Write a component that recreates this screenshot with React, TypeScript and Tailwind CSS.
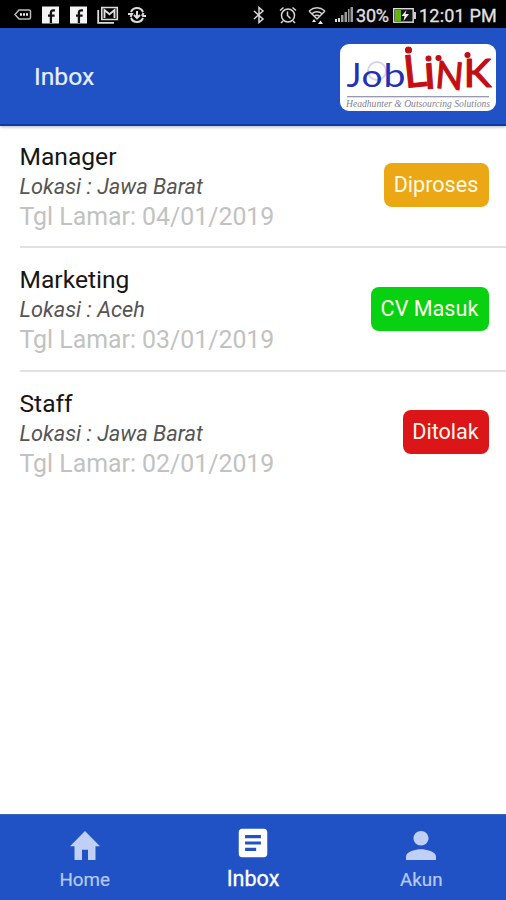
import React from 'react';

type Application = {
  title: string;
  location: string;
  date: string;
  status: string;
  badge: string;
};

const applications: Application[] = [
  { title: 'Manager', location: 'Jawa Barat', date: '04/01/2019', status: 'Diproses', badge: 'w-[105px] bg-[#eba814]' },
  { title: 'Marketing', location: 'Aceh', date: '03/01/2019', status: 'CV Masuk', badge: 'w-[118px] bg-[#08d111]' },
  { title: 'Staff', location: 'Jawa Barat', date: '02/01/2019', status: 'Ditolak', badge: 'w-[86px] bg-[#dc1518]' },
];

function FacebookIcon() {
  return (
    <svg width="17" height="18" viewBox="0 0 17 18">
      <rect width="17" height="17" y=".5" fill="#f4f4f4" />
      <path d="M13 4.3h-1.8q-2.3 0-2.3 2.4V17M6 9.6h6.6" fill="none" stroke="#111" strokeWidth="2.3" />
    </svg>
  );
}

function StatusBar() {
  return (
    <div className="flex h-7 shrink-0 items-center bg-black text-[#e2e2e2]">
      <svg className="ml-[14px]" width="18" height="13" viewBox="0 0 18 13" fill="none" stroke="#bcbcbc" strokeWidth="1.5">
        <path d="M1 6.5 5 2h10q1.5 0 1.5 1.5v6Q16.500 11 15 11H5Z" />
        <path d="M6 6.500h9" stroke="#eee" strokeWidth="2.500" strokeDasharray="2 1" />
      </svg>
      <div className="ml-[10px] mt-0.5"><FacebookIcon /></div>
      <div className="ml-[11px] mt-0.5"><FacebookIcon /></div>
      <svg className="ml-[10px] mt-0.5" width="22" height="18" viewBox="0 0 22 18" fill="none" stroke="#ddd">
        <path d="M1.200 4v12.800H17" strokeWidth="1.800" />
        <path d="M4.800 1.500h15.500v12H4.800Z" strokeWidth="1.600" />
        <path d="M7.500 12V4l5 4.300 5-4.300v8" strokeWidth="1.900" />
      </svg>
      <svg className="ml-[9px] mt-0.5" width="18" height="18" viewBox="0 0 18 18" fill="none" stroke="#ddd" strokeWidth="2">
        <path d="M3 6a6.500 6.500 0 0 1 12 0M3 12a6.500 6.500 0 0 0 12 0M0 8h4l-1.500 3M14 10h4M15.500 7l-1.500 3M9 5v7M6 9l3 3 3-3" />
      </svg>
      <svg className="ml-auto mt-0.5" width="14" height="18" viewBox="0 0 14 18" fill="none" stroke="#d8d8d8" strokeWidth="1.500">
        <path d="m2 5 9 8-4 3.500v-15L11 5l-9 8" />
      </svg>
      <svg className="ml-[13px] mt-0.5" width="18" height="18" viewBox="0 0 18 18" fill="none" stroke="#d8d8d8" strokeWidth="1.500">
        <circle cx="9" cy="9.500" r="6.500" />
        <path d="M1 4.500 4.500 1.500M13.500 1.500 17 4.500M4 15l-2 2M14 15l2 2M8.500 5.500v4l3 3" />
      </svg>
      <svg className="ml-[11px] mt-0.5" width="18" height="19" viewBox="0 0 18 19" fill="none" stroke="#d0d0d0" strokeWidth="1.500">
        <path d="M1 5q8-6.500 16 0M3.500 8q5.500-4.500 11 0M6 10.500q3-2.500 6 0M1 5l8 8 8-8" />
        <path d="m4 16 2-3 2 3ZM10 18l2.500-3.500L15 18Z" fill="#eee" stroke="none" />
      </svg>
      <svg className="ml-[9px] mt-0.5" width="18" height="16" viewBox="0 0 18 16">
        <path d="M0 12h2v3H0zM3 11h2v4H3z" fill="#ddd" />
        <path d="M6 8h2.500v7H6zM9.500 5H12v10H9.500zM13 2h1.500v13H13zM15.500 0H18v15h-2.500z" fill="#9b9b9b" />
      </svg>
      <span className="ml-[3px] mt-[3px] w-[34px] whitespace-nowrap text-[18px] leading-none tracking-[-0.2px] [-webkit-text-stroke:0.3px_#e2e2e2]">30%</span>
      <svg className="ml-[3px] mt-0.5" width="23" height="15" viewBox="0 0 23 15">
        <rect x=".7" y=".7" width="19.500" height="13.500" fill="#151515" stroke="#ddd" strokeWidth="1.400" />
        <path d="M20.500 4H23v7h-2.500z" fill="#ccc" />
        <path d="M2 2h6v11H2z" fill="#60b900" />
        <path d="m13.500 2-5 6h3l-1 5 5.500-7h-3.500Z" fill="#eee" />
      </svg>
      <span className="ml-[3px] mt-[3px] w-[87px] whitespace-nowrap text-[18px] leading-none tracking-[0.2px] [-webkit-text-stroke:0.3px_#e2e2e2]">12:01 PM</span>
    </div>
  );
}

function Logo() {
  return (
    <svg className="mr-[10px] mt-[16px] overflow-visible" width="156" height="67" viewBox="0 0 156 67">
      <rect width="156" height="67" rx="9" fill="#fff" />
      <circle cx="37" cy="27" r="9" fill="none" stroke="#d3d4ea" strokeWidth="2" />
      <g fontFamily="Lato, sans-serif" fontSize="32" fill="#2430b4">
        <text x="6.500" y="43" textLength="15" lengthAdjust="spacingAndGlyphs">J</text>
        <text x="21.500" y="43" fontSize="31" textLength="21" lengthAdjust="spacingAndGlyphs">o</text>
        <text x="43.500" y="43" textLength="22" lengthAdjust="spacingAndGlyphs">b</text>
      </g>
      <g fill="#c20e13" stroke="#c20e13" strokeWidth="1.100" strokeLinejoin="round" fontFamily="Lato, sans-serif">
        <text x="65" y="43.500" fontSize="45" textLength="23" lengthAdjust="spacingAndGlyphs" transform="rotate(-6 70 44)">L</text>
        <text x="84.500" y="44.500" fontSize="35" textLength="12" lengthAdjust="spacingAndGlyphs" transform="rotate(-4 90 44)">I</text>
        <text x="95.500" y="45" fontSize="38" textLength="28" lengthAdjust="spacingAndGlyphs" transform="rotate(5 108 34)">N</text>
        <text x="123.500" y="43" fontSize="38" textLength="28" lengthAdjust="spacingAndGlyphs">K</text>
        <circle cx="68.500" cy="6" r="3" />
        <circle cx="88.500" cy="14.500" r="2.500" />
        <circle cx="98.500" cy="14" r="2.500" />
        <circle cx="127.500" cy="11" r="2.500" />
      </g>
      <path d="M7 52.800h142" stroke="#777997" strokeWidth="1.100" />
      <text x="6" y="63" fontFamily="Liberation Serif, serif" fontStyle="italic" fontSize="10.500" textLength="144" lengthAdjust="spacingAndGlyphs" fill="#858296">Headhunter &amp; Outsourcing Solutions</text>
    </svg>
  );
}

function Row({ item, last }: { item: Application; last: boolean }) {
  return (
    <li className={`ml-[19.5px] flex h-[123.5px] justify-between pr-[17.5px] ${last ? '' : 'border-b-2 border-[#e1e1e1]'}`}>
      <div className="pt-[17.4px]">
        <h2 className="h-[30px] text-[24.6px] leading-[30px] text-[#161616]">{item.title}</h2>
        <p className="h-[29px] text-[21.8px] italic leading-[29px] text-[#555]">Lokasi : {item.location}</p>
        <p className="h-[31px] text-[24.85px] leading-[31px] text-[#c2c2c2]">Tgl Lamar: {item.date}</p>
      </div>
      <span className={`mt-[38.9px] flex h-[44px] items-center justify-center rounded-[8px] text-[21.6px] text-[#fff9e9] ${item.badge}`}>{item.status}</span>
    </li>
  );
}

export default function App() {
  return (
    <div className="flex h-[900px] w-[506px] flex-col overflow-hidden bg-white font-[Roboto,sans-serif]">
      <StatusBar />
      <header className="relative flex h-[98px] shrink-0 items-start justify-between border-b-2 border-[#0b3ba6] bg-[#2152c5] shadow-[0_1px_3px_rgba(0,0,0,0.3)]">
        <h1 className="ml-[34px] mt-[33px] text-[24.7px] leading-[32px] text-[#e6f0ff] [-webkit-text-stroke:0.2px_#e6f0ff]">Inbox</h1>
        <Logo />
      </header>
      <ul className="-mt-[1.5px] flex-1">
        {applications.map((item, i) => <Row key={item.title} item={item} last={i === applications.length - 1} />)}
      </ul>
      <nav className="flex h-[86px] shrink-0 border-t border-[#3e64bc] bg-[#2152c5] text-[#b5c9f4]">
        <a className="flex w-[170px] flex-col items-center pt-[16px]">
          <svg width="30" height="29" viewBox="2 3 20 17" preserveAspectRatio="none" fill="#c0cff6"><path d="M10 20v-6h4v6h5v-8h3L12 3 2 12h3v8z" /></svg>
          <span className="mt-[8px] text-[18.8px] leading-6 [-webkit-text-stroke:0.2px_#b5c9f4]">Home</span>
        </a>
        <a className="flex w-[168px] flex-col items-center pt-[9px] text-white">
          <svg width="38" height="38" viewBox="0 0 24 24" fill="#fff"><path d="M19 3H5c-1.100 0-2 .900-2 2v14c0 1.100.900 2 2 2h14c1.100 0 2-.900 2-2V5c0-1.100-.900-2-2-2zm-5 14H7v-2h7v2zm3-4H7v-2h10v2zm0-4H7V7h10v2z" /></svg>
          <span className="mt-[5px] text-[21.6px] leading-6 [-webkit-text-stroke:0.3px_white]">Inbox</span>
        </a>
        <a className="flex w-[170px] flex-col items-center pt-[16px]">
          <svg width="30" height="29" viewBox="4 4 16 16" preserveAspectRatio="none" fill="#c0cff6"><path d="M12 12c2.210 0 4-1.790 4-4s-1.790-4-4-4-4 1.790-4 4 1.790 4 4 4zm0 2c-2.670 0-8 1.340-8 4v2h16v-2c0-2.660-5.330-4-8-4z" /></svg>
          <span className="mt-[8px] text-[18.8px] leading-6 [-webkit-text-stroke:0.2px_#b5c9f4]">Akun</span>
        </a>
      </nav>
    </div>
  );
}
